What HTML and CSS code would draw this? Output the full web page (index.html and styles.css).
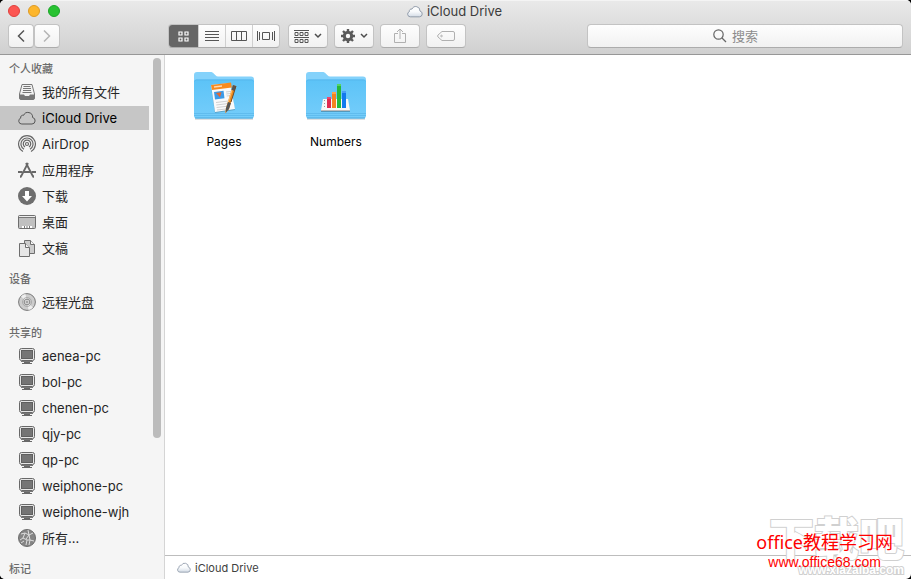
FILE: index.html
```html
<!DOCTYPE html>
<html lang="zh-CN">
<head>
    <meta charset="UTF-8">
    <meta name="viewport" content="width=device-width, initial-scale=1.0">
    <title>iCloud Drive</title>
    <link rel="stylesheet" href="styles.css">
</head>
<body>
    <!-- shared icons -->
    <svg class="defs" width="0" height="0" aria-hidden="true">
        <defs>
            <linearGradient id="cloud-fill" x1="0" y1="0" x2="0" y2="1">
                <stop offset="0" stop-color="#ffffff"/>
                <stop offset="0.5" stop-color="#f8fafc"/>
                <stop offset="1" stop-color="#d3dbe5"/>
            </linearGradient>
            <linearGradient id="folder-front" x1="0" y1="0" x2="0" y2="1">
                <stop offset="0" stop-color="#5cc3f7"/>
                <stop offset="1" stop-color="#75cdfa"/>
            </linearGradient>
        </defs>
        <symbol id="cloud" viewBox="0 0 18 14">
            <path d="M3.800 13H14a3.300 3.300 0 0 0 .6-6.500A4.700 4.700 0 0 0 5.600 4.300 2.300 2.300 0 0 0 2.700 7.100 3.050 3.050 0 0 0 3.800 13z"/>
        </symbol>
        <symbol id="pc" viewBox="0 0 18 18">
            <rect x="1.500" y="1.500" width="15" height="12" rx="2" fill="#e6e6e6" stroke="#686868"/>
            <rect x="3.500" y="3.500" width="11" height="8" fill="#757575" stroke="#5f5f5f"/>
            <path d="M3 14.500h12" stroke="#777"/>
            <path d="M6 15h6v1h2v1H4v-1h2z" fill="#686868"/>
        </symbol>
        <symbol id="folder" viewBox="0 0 60 50">
            <path d="M1 47h58" stroke="#000" stroke-opacity="0.25"/>
            <path d="M0 3a3 3 0 0 1 3-3h13.500c1.500 0 2.300.5 3.200 1.500l1.800 1.800c.8.8 1.500 1.200 2.500 1.200h33a3 3 0 0 1 3 3V20H0z" fill="#84d2fb"/>
            <path d="M0 10q0-2.500 2.500-2.500h55Q60 7.500 60 10v33.500q0 3-3 3H3q-3 0-3-3z" fill="url(#folder-front)"/>
            <path d="M.5 9.500q.3-1.500 2-1.500h55q1.700 0 2 1.500" fill="none" stroke="#56b7ee"/>
            <path d="M0 41.500h60M0 43.500h60" stroke="#4dabe1" stroke-opacity="0.5"/>
            <path d="M1 46h58" stroke="#4aa9df"/>
        </symbol>
        <symbol id="chevron" viewBox="0 0 8 6">
            <path d="M1 1l3 3 3-3" fill="none" stroke="#4d4d4d" stroke-width="1.500"/>
        </symbol>
    </svg>

    <div class="window">
        <header class="titlebar">
            <div class="title-row">
                <div class="lights">
                    <button class="light close" aria-label="关闭"></button>
                    <button class="light minimize" aria-label="最小化"></button>
                    <button class="light maximize" aria-label="缩放"></button>
                </div>
                <h1 class="title">
                    <svg class="title-cloud" width="16" height="13"><use href="#cloud"/></svg>
                    iCloud Drive
                </h1>
            </div>
            <div class="toolbar">
                <div class="nav-buttons">
                    <button class="tool nav" aria-label="返回">
                        <svg width="10" height="14"><path d="M8 1.500L2.500 7 8 12.500" fill="none" stroke="#555" stroke-width="1.500"/></svg>
                    </button>
                    <button class="tool nav" aria-label="前进">
                        <svg width="10" height="14"><path d="M2 1.500L7.500 7 2 12.500" fill="none" stroke="#b5b5b5" stroke-width="1.500"/></svg>
                    </button>
                </div>
                <div class="views">
                    <button class="view active" aria-label="图标">
                        <svg width="11" height="11" fill="none" stroke="#fff"><path d="M1 1h3v3H1zM7 1h3v3H7zM1 7h3v3H1zM7 7h3v3H7z" stroke-width="1.200"/></svg>
                    </button>
                    <button class="view" aria-label="列表">
                        <svg width="14" height="10" stroke="#555"><path d="M0 .5h14M0 3.500h14M0 6.500h14M0 9.500h14"/></svg>
                    </button>
                    <button class="view" aria-label="分栏">
                        <svg width="16" height="10" fill="none" stroke="#555"><path d="M.5.5h15v9H.5zM5.500.5v9M10.500.5v9"/></svg>
                    </button>
                    <button class="view" aria-label="Cover Flow">
                        <svg width="18" height="10" fill="none" stroke="#555"><path d="M.5 0v10M2.500 1v8M15.500 1v8M17.500 0v10M5.500 1.500h7v7h-7z"/></svg>
                    </button>
                </div>
                <button class="tool arrange" aria-label="排列方式">
                    <svg width="15" height="13" fill="none" stroke="#555"><path d="M0 .5h15M0 7.500h15M1 2.500h3v3H1zM6 2.500h3v3H6zM11 2.500h3v3h-3zM1 9.500h3v3H1zM6 9.500h3v3H6zM11 9.500h3v3h-3z"/></svg>
                    <svg width="8" height="6"><use href="#chevron"/></svg>
                </button>
                <button class="tool" aria-label="操作">
                    <svg width="14" height="14" viewBox="-7 -7 14 14">
                        <circle r="3.700" fill="none" stroke="#5a5a5a" stroke-width="3"/>
                        <path d="M0-7v2.500M0 4.500V7M-7 0h2.500M4.500 0H7M-5-5l2 2M3 3l2 2M-5 5l2-2M3-3l2-2" stroke="#5a5a5a" stroke-width="2.400"/>
                    </svg>
                    <svg width="8" height="6"><use href="#chevron"/></svg>
                </button>
                <button class="tool" aria-label="共享">
                    <svg width="12" height="16" fill="none" stroke="#b0b0b0"><path d="M4 5.500H.5v9h11v-9H8M6 11V1M3 4l3-3 3 3"/></svg>
                </button>
                <button class="tool" aria-label="标记">
                    <svg width="18" height="10" fill="none" stroke="#b0b0b0"><path d="M5 .5h11q1.500 0 1.500 1.500v6q0 1.500-1.500 1.500H5L1 6Q.2 5 1 4z"/><circle cx="4.500" cy="5" r=".8"/></svg>
                </button>
                <label class="search">
                    <svg class="search-icon" width="14" height="14" fill="none" stroke="#666"><circle cx="5.500" cy="5.500" r="4.700" stroke-width="1.200"/><path d="M9 9l4 4" stroke-width="1.300"/></svg>
                    <input type="search" placeholder="搜索" aria-label="搜索">
                </label>
            </div>
        </header>

        <div class="body">
            <nav class="sidebar">
                <h2>个人收藏</h2>
                <ul>
                    <li><a href="#">
                        <svg width="18" height="18"><path d="M4 1.500h10l2.500 9.500v4q0 1.500-1.500 1.500H3q-1.500 0-1.500-1.500v-4z" fill="#f2f2f2" stroke="#777"/><path d="M5.500 3.500h7M5 5.500h8M5 7.500h8M4.500 9.500h9" stroke="#777"/><path d="M1.500 11.500H6l1 1.500h4l1-1.500h4.500V15q0 1.500-1.500 1.500H3q-1.500 0-1.500-1.500z" fill="#777"/></svg>
                        我的所有文件
                    </a></li>
                    <li><a href="#" class="selected">
                        <svg class="side-cloud" width="18" height="14"><use href="#cloud"/></svg>
                        iCloud Drive
                    </a></li>
                    <li><a href="#">
                        <svg width="18" height="18" fill="none" stroke="#686868" stroke-width="1.200">
                            <path d="M5 16.500a8.400 8.400 0 1 1 8 0M6 14.200a6 6 0 1 1 6 0M7 12a3.700 3.700 0 1 1 4 0"/>
                            <circle cx="9" cy="9" r="1.500"/>
                        </svg>
                        AirDrop
                    </a></li>
                    <li><a href="#">
                        <svg width="18" height="18" fill="none" stroke="#686868">
                            <path d="M8 2l7 13.500M10 2L3 15.500" stroke-width="1.800"/>
                            <path d="M0 11h4.500M6 11h6M13.500 11H18" stroke-width="2"/>
                            <path d="M2.500 14.500v2l1.500-1M15.500 14.500v2l-1.500-1"/>
                        </svg>
                        应用程序
                    </a></li>
                    <li><a href="#">
                        <svg width="18" height="18"><circle cx="9" cy="9" r="9" fill="#6e6e6e"/><path d="M7 4h4v5h3l-5 5.500L4 9h3z" fill="#fff"/></svg>
                        下载
                    </a></li>
                    <li><a href="#">
                        <svg width="18" height="14"><rect x=".5" y=".5" width="17" height="13" rx="1" fill="#c0c0c0" stroke="#6e6e6e"/><path d="M1 1.500h16" stroke="#eee"/><path d="M1 2.500h16" stroke="#777"/><path d="M4 11h10v2H4z" fill="#fff"/><path d="M6.500 11v2M9 11v2M11.500 11v2" stroke="#777"/></svg>
                        桌面
                    </a></li>
                    <li><a href="#">
                        <svg width="18" height="18" stroke="#6e6e6e"><path d="M6.500 1.500h6l4 4v9h-10z" fill="#ccc"/><path d="M12.500 1.500v4h4" fill="#f5f5f5"/><path d="M1.500 4.500h6l4 4v9h-10z" fill="#e6e6e6"/><path d="M7.500 4.500v4h4" fill="#f5f5f5"/></svg>
                        文稿
                    </a></li>
                </ul>
                <h2>设备</h2>
                <ul>
                    <li><a href="#">
                        <svg width="18" height="18" fill="none"><circle cx="9" cy="9" r="8.400" fill="#ccc" stroke="#777"/><path d="M9 9L3 3.500A8 8 0 0 1 7.500 1zM9 9l6 5.500a8 8 0 0 1-4.500 2.500z" fill="#eee"/><circle cx="9" cy="9" r="4.500" stroke="#aaa"/><circle cx="9" cy="9" r="2.800" fill="#e8e8e8" stroke="#888"/><circle cx="9" cy="9" r="1" fill="#fff" stroke="#888"/></svg>
                        远程光盘
                    </a></li>
                </ul>
                <h2>共享的</h2>
                <ul>
                    <li><a href="#"><svg width="18" height="18"><use href="#pc"/></svg>aenea-pc</a></li>
                    <li><a href="#"><svg width="18" height="18"><use href="#pc"/></svg>bol-pc</a></li>
                    <li><a href="#"><svg width="18" height="18"><use href="#pc"/></svg>chenen-pc</a></li>
                    <li><a href="#"><svg width="18" height="18"><use href="#pc"/></svg>qjy-pc</a></li>
                    <li><a href="#"><svg width="18" height="18"><use href="#pc"/></svg>qp-pc</a></li>
                    <li><a href="#"><svg width="18" height="18"><use href="#pc"/></svg>weiphone-pc</a></li>
                    <li><a href="#"><svg width="18" height="18"><use href="#pc"/></svg>weiphone-wjh</a></li>
                    <li><a href="#">
                        <svg width="18" height="18" fill="none"><circle cx="9" cy="9" r="8.500" fill="#858585" stroke="#6e6e6e"/><path d="M3 5l4-1 4 2 4-2M7 4L5 9l-3 2M11 6l1 5 4 1M5 9l4 2 3 0M9 11l-1 5M12 11l-1 5M11 6L8 10M10 1l1 5M3 14l3-2" stroke="#ddd"/></svg>
                        所有...
                    </a></li>
                </ul>
                <h2>标记</h2>
                <div class="scroll-thumb"></div>
            </nav>

            <main class="content">
                <div class="files">
                    <a href="#" class="file">
                        <svg width="60" height="50">
                            <use href="#folder"/>
                            <path d="M17 15l19-3 5 26-20 3z" fill="#000" fill-opacity="0.2"/>
                            <path d="M17 13l19-2 5 26-20 3z" fill="#fafafa"/>
                            <path d="M17 13l20-2.500.8 5L18 18z" fill="#f78b1f"/>
                            <path d="M20 15l8-1" stroke="#ffd9ad" stroke-width="1.500"/>
                            <path d="M20 20l9.500-1.200 1 7.500-9.500 1.200z" fill="#3d9be8"/>
                            <path d="M22 21l5.500-.7-1.500 5z" fill="#e8662c"/>
                            <path d="M32 20l5-.6M32.300 22l5-.6M32.600 24l5-.6M22 30.500l14-1.700M22.300 33l13-1.600M22.600 35.500l12-1.400M23 38l9-1" stroke="#d0d0d0"/>
                            <path d="M39 13l3 1-7 23-3.500 4 .5-5z" fill="#f28c1c"/>
                            <path d="M39 13l3 1-1.500 5-3-1z" fill="#555"/>
                            <path d="M38 18l-5.500 18-1 5" fill="none" stroke="#ffc477"/>
                            <path d="M34 30l3 1-2 6-3.500 4 .5-5z" fill="#555"/>
                            <path d="M42 14l-5 16" stroke="#6b4a2a"/>
                        </svg>
                        <span>Pages</span>
                    </a>
                    <a href="#" class="file">
                        <svg width="60" height="50">
                            <use href="#folder"/>
                            <path d="M15 38h29v2H15z" fill="#000" fill-opacity="0.25"/>
                            <path d="M17 27h25l2 11.500H15z" fill="#f6f6f6"/>
                            <path d="M15 38.500h29" stroke="#bbb"/>
                            <path d="M18.500 28v9" stroke="#999" stroke-dasharray="1 2"/>
                            <path d="M21 25h4v11h-4z" fill="#e0284f"/><path d="M21 25h4v2h-4z" fill="#f0486e"/>
                            <path d="M26 20h4v16h-4z" fill="#f58220"/><path d="M26 20h4v2h-4z" fill="#ffa24a"/>
                            <path d="M31 12h4v24h-4z" fill="#25b83c"/><path d="M31 12h4v2h-4z" fill="#58d465"/>
                            <path d="M36 19h4v17h-4z" fill="#1179ee"/><path d="M36 19h4v2h-4z" fill="#479ff8"/>
                        </svg>
                        <span>Numbers</span>
                    </a>
                </div>
                <footer class="pathbar">
                    <svg class="path-cloud" width="14" height="11"><use href="#cloud"/></svg>
                    iCloud Drive
                </footer>
            </main>
        </div>

        <div class="watermark">
            <span class="mark-logo">下载吧</span>
            <span class="mark-url">www.xiazaiba.com</span>
        </div>
        <div class="credit">
            <span class="credit-name">office教程学习网</span>
            <span class="credit-url">www.office68.com</span>
        </div>
    </div>
</body>
</html>
```
FILE: styles.css
```css
*{
    margin: 0;
    padding: 0;
    box-sizing: border-box;
}
html{
    background-color: #000;
}
body{
    font-family: Inter, "Noto Sans CJK SC", sans-serif;
    font-size: 13px;
    color: #262626;
}
.defs{
    position: absolute;
}
.window{
    position: relative;
    display: flex;
    flex-direction: column;
    height: 100vh;
    overflow: hidden;
    border-radius: 5px;
    background-color: #fff;
}
button, input{
    font: inherit;
}
svg{
    flex: none;
}

/* title bar */
.titlebar{
    background: linear-gradient(#e9e9e9, #d0d0d0);
    border-top: 1px solid #f4f4f4;
    border-bottom: 1px solid #979797;
    padding-bottom: 6px;
}
.title-row{
    position: relative;
    display: flex;
    align-items: center;
    justify-content: center;
    height: 23px;
}
.lights{
    position: absolute;
    left: 8px;
    top: 4px;
    display: flex;
    gap: 8px;
}
.light{
    width: 12px;
    height: 12px;
    border-radius: 50%;
    border: 1px solid;
}
.close{
    background-color: #fc5652;
    border-color: #df403d;
}
.minimize{
    background-color: #fdb62c;
    border-color: #dd9a25;
}
.maximize{
    background-color: #28c231;
    border-color: #1ba528;
}
.title{
    display: flex;
    align-items: center;
    gap: 4px;
    height: 20px;
    padding-right: 2px;
    margin-bottom: 3px;
    font-size: 13px;
    font-weight: 400;
    color: #3c3c3c;
}
.title-cloud, .path-cloud{
    fill: url(#cloud-fill);
    stroke: #8793a3;
}
.toolbar{
    display: flex;
    align-items: center;
    gap: 6px;
    padding: 0 8px;
    height: 24px;
}
.nav-buttons{
    display: flex;
    margin-right: 102px;
}
.tool, .views, .search{
    display: flex;
    align-items: center;
    justify-content: center;
    height: 24px;
    border: 1px solid #c3c3c3;
    border-bottom-color: #acacac;
    border-radius: 4px;
    background: linear-gradient(#fefefe, #f1f1f1);
}
.tool{
    width: 40px;
    gap: 5px;
}
.nav{
    width: 26px;
}
.views{
    width: 112px;
    overflow: hidden;
}
.view{
    display: flex;
    align-items: center;
    justify-content: center;
    flex: 1;
    height: 24px;
    border: none;
    border-left: 1px solid #cfcfcf;
    background: transparent;
}
.view.active{
    flex: none;
    width: 29px;
    border-left: none;
    background-color: #666;
}
.arrange{
    margin-left: 2px;
}
.search{
    position: relative;
    flex: 1;
    margin-left: 115px;
}
.search input{
    width: 100%;
    height: 22px;
    border: none;
    outline: none;
    background: transparent;
    text-align: center;
    appearance: none;
}
.search input::placeholder{
    color: #8c8c8c;
}
.search input::-webkit-search-cancel-button{
    display: none;
}
.search-icon{
    position: absolute;
    left: calc(50% - 32px);
    top: 4px;
}

/* sidebar */
.body{
    display: flex;
    flex: 1;
    min-height: 0;
}
.sidebar{
    position: relative;
    width: 165px;
    padding-top: 3px;
    overflow: hidden;
    background-color: #f5f5f5;
    border-right: 1px solid #d5d5d5;
}
.sidebar h2{
    padding-left: 9px;
    font-size: 11px;
    line-height: 22px;
    font-weight: 500;
    color: #6b6b6b;
}
.sidebar ul{
    display: flex;
    flex-direction: column;
    gap: 2px;
    margin: 0 15px 8px 0;
    list-style: none;
}
.sidebar a{
    display: flex;
    align-items: center;
    gap: 6px;
    height: 24px;
    padding-left: 18px;
    line-height: 16px;
    color: #262626;
    text-decoration: none;
    white-space: nowrap;
}
.sidebar a.selected{
    background-color: #c6c6c6;
    color: #000;
}
.side-cloud{
    fill: none;
    stroke: #555;
}
.scroll-thumb{
    position: absolute;
    top: 3px;
    right: 3px;
    width: 8px;
    height: 380px;
    border-radius: 4px;
    background-color: #bcbcbc;
}

/* files */
.content{
    display: flex;
    flex-direction: column;
    flex: 1;
}
.files{
    display: flex;
    flex: 1;
    align-items: flex-start;
    padding: 17px 3px;
}
.file{
    display: flex;
    flex-direction: column;
    align-items: center;
    gap: 12px;
    width: 112px;
    font-size: 12px;
    line-height: 16px;
    color: #000;
    text-decoration: none;
}
.pathbar{
    display: flex;
    align-items: center;
    gap: 4px;
    height: 24px;
    padding-left: 12px;
    border-top: 1px solid #bdbdbd;
    font-size: 11px;
    color: #404040;
}

/* watermark over the window */
.watermark, .credit{
    position: absolute;
    display: flex;
    flex-direction: column;
    white-space: nowrap;
}
.watermark{
    right: 7px;
    bottom: 2px;
    align-items: flex-end;
    color: #fff;
    -webkit-text-stroke: 2px #d0d0d0;
    paint-order: stroke fill;
}
.mark-logo{
    font-size: 45px;
    line-height: 46px;
    font-weight: 900;
}
.mark-url{
    font-family: "Liberation Sans", Arial, sans-serif;
    font-size: 12px;
    line-height: 14px;
    font-weight: 700;
}
.credit{
    right: 18px;
    bottom: 8px;
    align-items: center;
    color: #f00;
}
.credit-name{
    font-family: "Noto Sans", "Noto Sans CJK SC", sans-serif;
    font-size: 18px;
    line-height: 22px;
}
.credit-url{
    font-family: "Liberation Sans", Arial, sans-serif;
    font-size: 14px;
    line-height: 18px;
}
```
